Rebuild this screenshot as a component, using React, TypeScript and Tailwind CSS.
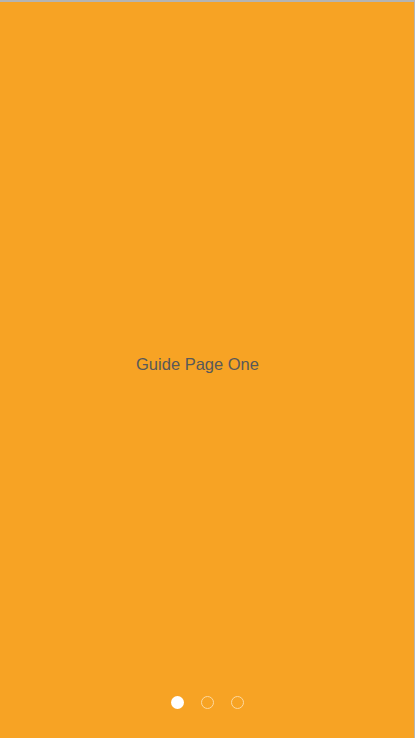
const pages = ["Guide Page One", "Guide Page Two", "Guide Page Three"];

export default function App() {
  const current = 0;

  return (
    <div className="flex h-[738px] w-[415px] flex-col border-t-2 border-r border-[#b4b4b4] bg-[#f7a324] font-['Liberation_Sans',Arial,sans-serif]">
      <div className="flex flex-1 items-center justify-center pt-[30px] pr-[19px]">
        <p className="text-[16.5px] text-[#595959]">{pages[current]}</p>
      </div>
      <div className="flex items-center justify-center gap-[17px] pb-[29px]">
        {pages.map((page, i) => (
          <span
            key={page}
            className={
              i === current
                ? "size-[13px] rounded-full bg-white"
                : "size-[13px] rounded-full border border-[#fcd9a0]"
            }
          />
        ))}
      </div>
    </div>
  );
}
